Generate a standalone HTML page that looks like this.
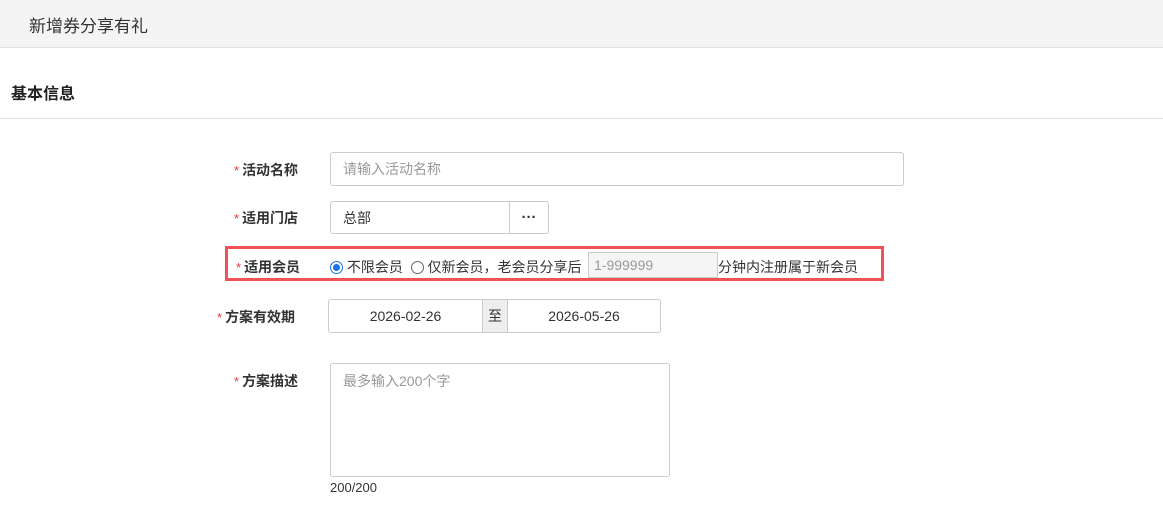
<!DOCTYPE html>
<html><head><meta charset="utf-8"><style>
*{box-sizing:border-box;margin:0;padding:0}
body{width:1163px;height:517px;background:#fff;font-family:"Liberation Sans","Noto Sans CJK SC",sans-serif;font-size:13px;color:#333;position:relative;overflow:hidden}
.abs{position:absolute}
.hdr{left:0;top:0;width:1163px;height:48px;background:#f4f4f4;border-bottom:1px solid #e2e2e2}
.hdr span{position:absolute;left:29px;top:12px;font-size:17px;color:#333}
.sec{left:11px;top:80px;font-size:16px;font-weight:bold;color:#222}
.line{left:0;top:118px;width:1163px;height:1px;background:#ddd}
.lbl{font-weight:bold;font-size:14px;color:#333;white-space:nowrap}
.lbl b{color:#e4393c;font-weight:normal;margin-right:3px;font-size:13px}
.inp{border:1px solid #ccc;border-radius:3px;background:#fff;color:#999;padding-left:12px;display:flex;align-items:center;font-size:14px}
.radio{display:inline-block;width:13px;height:13px;border:1px solid #666;border-radius:50%;vertical-align:-2px;position:relative}
.radio.on{border-color:#1a73e8}
.radio.on:after{content:"";position:absolute;left:2px;top:2px;width:7px;height:7px;border-radius:50%;background:#1a73e8}
</style></head><body>
<div class="abs hdr"><span>新增券分享有礼</span></div>
<div class="abs sec">基本信息</div>
<div class="abs line"></div>

<div class="abs lbl" style="left:234px;top:160px"><b>*</b>活动名称</div>
<div class="abs inp" style="left:330px;top:152px;width:574px;height:34px">请输入活动名称</div>

<div class="abs lbl" style="left:234px;top:208px"><b>*</b>适用门店</div>
<div class="abs inp" style="left:330px;top:201px;width:180px;height:33px;color:#333;border-radius:3px 0 0 3px">总部</div>
<div class="abs" style="left:509px;top:201px;width:40px;height:33px;border:1px solid #ccc;border-radius:0 3px 3px 0;text-align:center;line-height:32px;font-weight:bold;font-size:15px">···</div>

<div class="abs" style="left:225px;top:246px;width:659px;height:35px;border:3px solid #f05256"></div>
<div class="abs lbl" style="left:236px;top:257px"><b>*</b>适用会员</div>
<div class="abs" style="left:330px;top:257px;color:#333;font-size:14px;white-space:nowrap"><span class="radio on"></span> 不限会员 &nbsp;<span class="radio"></span> 仅新会员，老会员分享后</div>
<div class="abs inp" style="left:588px;top:252px;width:130px;height:26px;background:#f5f5f5;color:#999;padding-left:5px;border-radius:0">1-999999</div>
<div class="abs" style="left:718px;top:257px;font-size:14px">分钟内注册属于新会员</div>

<div class="abs lbl" style="left:217px;top:307px"><b>*</b>方案有效期</div>
<div class="abs" style="left:328px;top:299px;width:333px;height:34px;border:1px solid #ccc;border-radius:3px;display:flex">
<div style="width:153px;text-align:center;line-height:32px;font-size:14px">2026-02-26</div>
<div style="width:26px;background:#eee;border-left:1px solid #ccc;border-right:1px solid #ccc;text-align:center;line-height:32px;font-size:14px">至</div>
<div style="flex:1;text-align:center;line-height:32px;font-size:14px">2026-05-26</div></div>

<div class="abs lbl" style="left:234px;top:371px"><b>*</b>方案描述</div>
<div class="abs" style="left:330px;top:363px;width:340px;height:114px;border:1px solid #ccc;border-radius:3px;color:#999;padding:7px 12px;font-size:14px">最多输入200个字</div>
<div class="abs" style="left:330px;top:480px;font-size:13px">200/200</div>
</body></html>
